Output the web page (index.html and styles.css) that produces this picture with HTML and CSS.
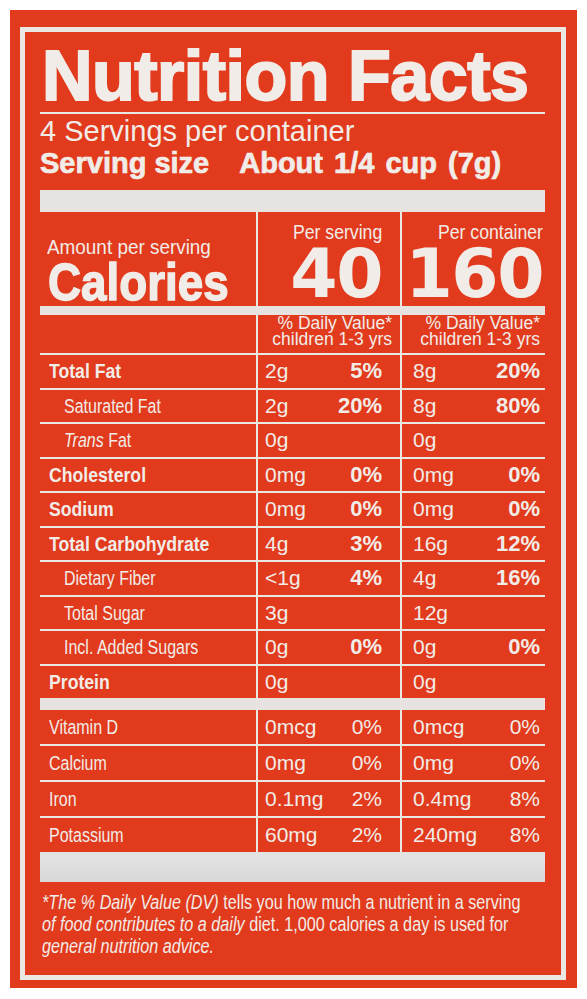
FILE: index.html
```html
<!DOCTYPE html>
<html lang="en">
<head>
  <meta charset="UTF-8">
  <title>Nutrition Facts</title>

  <link rel="stylesheet" href="styles.css">
</head>
<body>
  <div id="label">
    <div id="frame">
      <h1 class="title">Nutrition Facts</h1>
      <p class="servings">4 Servings per container</p>
      <p class="size"><span>Serving size</span><span class="size-value">About 1/4 cup (7g)</span></p>
      <div class="bar bar-thick"></div>

      <div class="grid row-cal">
        <div class="cal-label">
          <span class="amount-per">Amount per serving</span>
          <span class="calories">Calories</span>
        </div>
        <div class="cal-col col2">
          <span class="per">Per serving</span>
          <span class="kcal">40</span>
        </div>
        <div class="cal-col col3">
          <span class="per">Per container</span>
          <span class="kcal">160</span>
        </div>
      </div>
      <div class="bar bar-cal"></div>

      <div class="grid row-dv">
        <div></div>
        <div class="dv col2">% Daily Value*<br>children 1-3 yrs</div>
        <div class="dv col3">% Daily Value*<br>children 1-3 yrs</div>
      </div>

      <div class="grid nrow">
        <div class="name bold"><span>Total Fat</span></div>
        <div class="val col2"><span>2g</span><b>5%</b></div>
        <div class="val col3"><span>8g</span><b>20%</b></div>
      </div>
      <div class="grid nrow">
        <div class="name sub"><span>Saturated Fat</span></div>
        <div class="val col2"><span>2g</span><b>20%</b></div>
        <div class="val col3"><span>8g</span><b>80%</b></div>
      </div>
      <div class="grid nrow">
        <div class="name sub"><span><i>Trans</i> Fat</span></div>
        <div class="val col2"><span>0g</span></div>
        <div class="val col3"><span>0g</span></div>
      </div>
      <div class="grid nrow">
        <div class="name bold"><span>Cholesterol</span></div>
        <div class="val col2"><span>0mg</span><b>0%</b></div>
        <div class="val col3"><span>0mg</span><b>0%</b></div>
      </div>
      <div class="grid nrow">
        <div class="name bold"><span>Sodium</span></div>
        <div class="val col2"><span>0mg</span><b>0%</b></div>
        <div class="val col3"><span>0mg</span><b>0%</b></div>
      </div>
      <div class="grid nrow">
        <div class="name bold"><span>Total Carbohydrate</span></div>
        <div class="val col2"><span>4g</span><b>3%</b></div>
        <div class="val col3"><span>16g</span><b>12%</b></div>
      </div>
      <div class="grid nrow">
        <div class="name sub"><span>Dietary Fiber</span></div>
        <div class="val col2"><span>&lt;1g</span><b>4%</b></div>
        <div class="val col3"><span>4g</span><b>16%</b></div>
      </div>
      <div class="grid nrow">
        <div class="name sub"><span>Total Sugar</span></div>
        <div class="val col2"><span>3g</span></div>
        <div class="val col3"><span>12g</span></div>
      </div>
      <div class="grid nrow">
        <div class="name sub"><span>Incl. Added Sugars</span></div>
        <div class="val col2"><span>0g</span><b>0%</b></div>
        <div class="val col3"><span>0g</span><b>0%</b></div>
      </div>
      <div class="grid nrow last">
        <div class="name bold"><span>Protein</span></div>
        <div class="val col2"><span>0g</span></div>
        <div class="val col3"><span>0g</span></div>
      </div>
      <div class="bar bar-mid"></div>

      <div class="grid nrow vrow">
        <div class="name"><span>Vitamin D</span></div>
        <div class="val col2"><span>0mcg</span><span>0%</span></div>
        <div class="val col3"><span>0mcg</span><span>0%</span></div>
      </div>
      <div class="grid nrow vrow">
        <div class="name"><span>Calcium</span></div>
        <div class="val col2"><span>0mg</span><span>0%</span></div>
        <div class="val col3"><span>0mg</span><span>0%</span></div>
      </div>
      <div class="grid nrow vrow">
        <div class="name"><span>Iron</span></div>
        <div class="val col2"><span>0.1mg</span><span>2%</span></div>
        <div class="val col3"><span>0.4mg</span><span>8%</span></div>
      </div>
      <div class="grid nrow vrow last">
        <div class="name"><span>Potassium</span></div>
        <div class="val col2"><span>60mg</span><span>2%</span></div>
        <div class="val col3"><span>240mg</span><span>8%</span></div>
      </div>
      <div class="bar bar-box"></div>

      <div class="note-wrap">
        <p class="note"><i>*The % Daily Value (DV)</i> tells you how much a nutrient in a serving<br><i>of food contributes to a daily</i> diet. 1,000 calories a day is used for<br><i>general nutrition advice.</i></p>
      </div>
    </div>
  </div>
</body>
</html>
```

FILE: styles.css
```css
body {
  margin: 0;
  background-color: #fff;
  font-family: "Liberation Sans", Arial, sans-serif;
  color: #f1ece7;
}

#label {
  background-color: #e13a1d;
  margin: 10px;
  width: 567px;
  height: 978px;
  box-sizing: border-box;
  padding: 17px 11px 8px 10px;
}

#frame {
  border: 5px solid #ebe7e3;
  height: 100%;
  box-sizing: border-box;
  padding: 0 16px 0 15px;
}

.title {
  margin: 0;
  padding-top: 8px;
  padding-left: 2px;
  font-size: 70px;
  line-height: 72px;
  font-weight: bold;
  letter-spacing: -0.5px;
  -webkit-text-stroke: 2px #f1ece7;
  border-bottom: 2px solid #ebe7e3;
}

.servings {
  margin: 0;
  padding-top: 2px;
  font-size: 29px;
  line-height: 30px;
}

.size {
  margin: 0;
  padding-top: 2px;
  font-size: 29px;
  line-height: 30px;
  font-weight: bold;
  -webkit-text-stroke: 0.7px #f1ece7;
}

.size-value {
  margin-left: 30px;
  word-spacing: 3px;
}

.bar {
  background-color: #e6e3e0;
}

.bar-thick {
  margin-top: 12px;
  height: 22px;
}

.bar-cal {
  height: 9px;
}

.bar-mid {
  height: 12px;
}

.bar-box {
  height: 30px;
  background: linear-gradient(#e4e4e4, #d8d8d8);
}

.grid {
  display: grid;
  grid-template-columns: 216px 144px 145px;
}

.col2,
.col3 {
  border-left: 2px solid #ebe7e3;
}

/* calories block */
.row-cal {
  height: 94px;
}

.cal-label {
  display: flex;
  flex-direction: column;
  align-items: flex-start;
  justify-content: flex-end;
  padding: 0 0 2px 7px;
}

.amount-per {
  display: inline-block;
  font-size: 21px;
  line-height: 22px;
  margin-bottom: 3px;
  transform: scaleX(0.9);
  transform-origin: left center;
  white-space: nowrap;
}

.calories {
  display: inline-block;
  font-size: 52px;
  line-height: 43px;
  font-weight: bold;
  -webkit-text-stroke: 1.5px #f1ece7;
  transform: scaleX(0.88);
  transform-origin: left center;
  margin-left: 1px;
}

.cal-col {
  display: flex;
  flex-direction: column;
  align-items: flex-end;
  padding: 9px 18px 0 0;
}

.cal-col.col3 {
  padding-right: 2px;
}

.per {
  display: inline-block;
  font-size: 21px;
  line-height: 22px;
  margin-bottom: 3px;
  transform: scaleX(0.84);
  transform-origin: right center;
  white-space: nowrap;
}

.kcal {
  font-family: "DejaVu Sans", sans-serif;
  font-weight: bold;
  font-size: 68px;
  line-height: 55px;
  letter-spacing: -1.5px;
}

/* daily value header */
.row-dv {
  height: 40px;
  box-sizing: border-box;
  border-bottom: 2px solid #ebe7e3;
}

.dv {
  text-align: right;
  font-size: 17.5px;
  line-height: 16px;
  padding: 0 8px 0 0;
  white-space: nowrap;
}

.dv.col3 {
  padding-right: 5px;
}

/* nutrient rows */
.nrow {
  height: 34.5px;
  box-sizing: border-box;
  border-bottom: 2px solid #ebe7e3;
}

.nrow.last {
  height: 32.5px;
  border-bottom: none;
}

.vrow {
  height: 36px;
}

.vrow.last {
  height: 34px;
}

.name {
  display: flex;
  align-items: center;
  padding-left: 9px;
  font-size: 20px;
  line-height: 24px;
}

.name span {
  display: inline-block;
  white-space: nowrap;
  transform: scaleX(0.8);
  transform-origin: left center;
}

.name.bold {
  font-weight: bold;
  font-size: 21px;
}

.name.bold span {
  transform: scaleX(0.84);
}

.name.sub {
  padding-left: 24px;
}

.val {
  display: flex;
  justify-content: space-between;
  align-items: center;
  font-size: 21px;
  line-height: 24px;
  padding: 0 18px 0 7px;
}

.val.col3 {
  padding: 0 5px 0 11px;
}

.val b {
  font-size: 22px;
}

/* footnote */
.note-wrap {
  padding: 9px 0 0 2px;
}

.note {
  margin: 0;
  width: 620px;
  font-size: 20px;
  line-height: 22px;
  white-space: nowrap;
  transform: scaleX(0.81);
  transform-origin: left top;
}
```
